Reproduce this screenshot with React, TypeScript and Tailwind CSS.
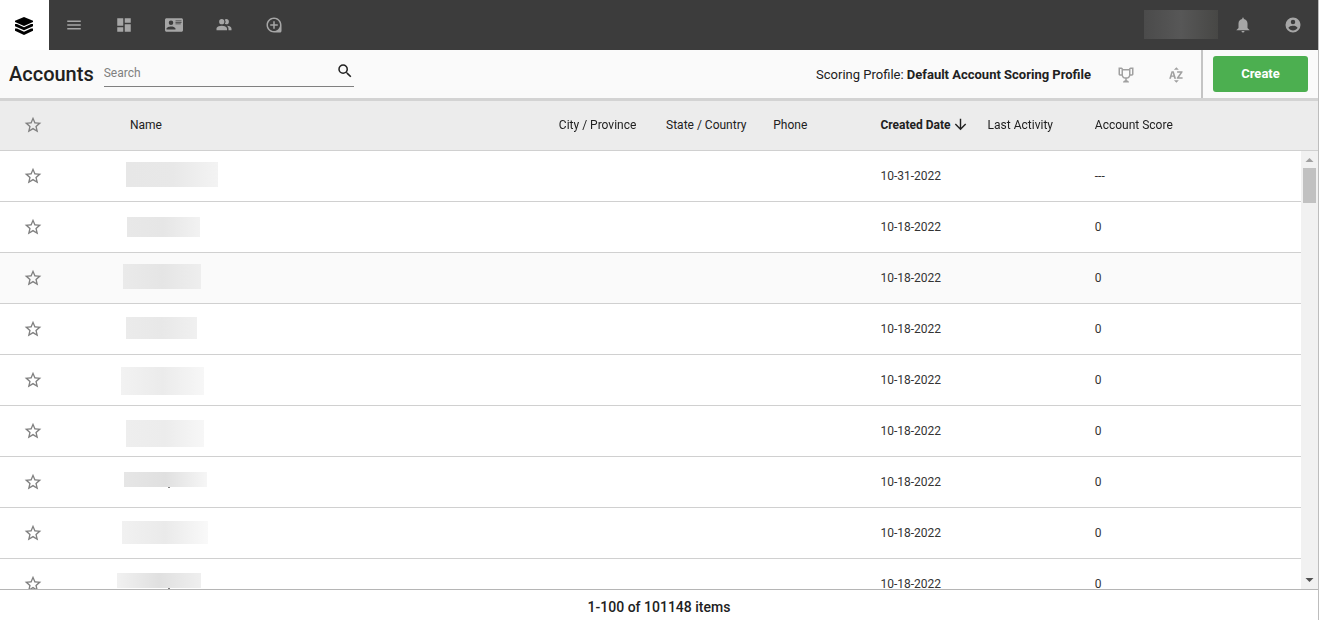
import React, { useState } from "react";
import { MdArrowDownward, MdDashboard, MdLoupe, MdMenu, MdSearch, MdStarBorder } from "react-icons/md";

function Glyph({ d }: { d: string }) {
  return (
    <svg viewBox="0 0 24 24" className="size-[18px]" fill="currentColor" aria-hidden="true">
      <path d={d} />
    </svg>
  );
}

const ICONS = {
  card: "M2,3H22C23.05,3 24,3.95 24,5V19C24,20.05 23.05,21 22,21H2C0.95,21 0,20.05 0,19V5C0,3.95 0.95,3 2,3M14,6V7H22V6H14M14,8V9H21.5L22,9V8H14M14,10V11H21V10H14M8,13.91C6,13.91 2,15 2,17V18H14V17C14,15 10,13.91 8,13.91M8,6A3,3 0 0,0 5,9A3,3 0 0,0 8,12A3,3 0 0,0 11,9A3,3 0 0,0 8,6Z",
  people:
    "M16 17V19H2V17S2 13 9 13 16 17 16 17M12.5 7.5A3.5 3.5 0 1 0 9 11A3.5 3.5 0 0 0 12.5 7.5M15.94 13A5.32 5.32 0 0 1 18 17V19H22V17S22 13.37 15.94 13M15 4A3.39 3.39 0 0 0 13.07 4.59A5 5 0 0 1 13.07 10.41A3.39 3.39 0 0 0 15 11A3.5 3.5 0 0 0 15 4Z",
  bell: "M14,20A2,2 0 0,1 12,22A2,2 0 0,1 10,20H14M12,2A1,1 0 0,1 13,3V4.08C15.84,4.56 18,7.03 18,10V16L21,19H3L6,16V10C6,7.03 8.16,4.56 11,4.08V3A1,1 0 0,1 12,2Z",
  account:
    "M12,19.2C9.5,19.2 7.29,17.92 6,16C6.03,14 10,12.9 12,12.9C14,12.9 17.97,14 18,16C16.71,17.92 14.5,19.2 12,19.2M12,5A3,3 0 0,1 15,8A3,3 0 0,1 12,11A3,3 0 0,1 9,8A3,3 0 0,1 12,5M12,2A10,10 0 0,0 2,12A10,10 0 0,0 12,22A10,10 0 0,0 22,12C22,6.47 17.5,2 12,2Z",
  trophy:
    "M18 2C17.1 2 16 3 16 4H8C8 3 6.9 2 6 2H2V11C2 12 3 13 4 13H6.2C6.6 15 7.9 16.7 11 17V19.08C8 19.54 8 22 8 22H16C16 22 16 19.54 13 19.08V17C16.1 16.7 17.4 15 17.8 13H20C21 13 22 12 22 11V2H18M6 11H4V4H6V11M16 11.5C16 13.43 15.42 15 12 15C8.59 15 8 13.43 8 11.5V6H16V11.5M20 11H18V4H20V11Z",
  sort: "M9.25,5L12.5,1.75L15.75,5H9.25M15.75,19L12.5,22.25L9.25,19H15.75M8.89,14.3H6L5.28,17H2.91L6,7H9L12.13,17H9.67L8.89,14.3M6.33,12.68H8.56L7.93,10.56L7.67,9.59L7.42,8.63H7.39L7.17,9.6L6.93,10.58L6.33,12.68M13.05,17V15.74L17.8,8.97V8.91H13.5V7H20.73V8.34L16.09,15V15.08H20.8V17H13.05Z",
};

function IconButton({ label, className = "", children }: { label: string; className?: string; children: React.ReactNode }) {
  return (
    <button type="button" aria-label={label} className={`flex w-[50px] shrink-0 items-center justify-center self-stretch ${className}`}>
      {children}
    </button>
  );
}

function TopBar() {
  return (
    <header className="flex h-[50px] shrink-0 items-center bg-[#3c3c3c] text-[#a6a6a6]">
      <a href="#home" aria-label="Home" className="flex w-[49px] items-center justify-center self-stretch bg-white pt-[2px] pr-px text-black">
        <svg viewBox="0 0 18 18" className="size-[18px]" fill="currentColor" aria-hidden="true">
          <path d="M9 0 18 3.8V5L9 9 0 5V3.8Z" />
          <path d="M0 7 2 7 9 10.2 16 7 18 7V9.2L9 13.3 0 9.2Z" />
          <path d="M0 11.6 2 11.6 9 14.8 16 11.6 18 11.6V13.8L9 18 0 13.8Z" />
        </svg>
      </a>
      <nav className="flex self-stretch">
        <IconButton label="Menu"><MdMenu className="size-[18px]" /></IconButton>
        <IconButton label="Dashboard"><MdDashboard className="size-[18px]" /></IconButton>
        <IconButton label="Accounts"><Glyph d={ICONS.card} /></IconButton>
        <IconButton label="Contacts"><Glyph d={ICONS.people} /></IconButton>
        <IconButton label="Add"><MdLoupe className="size-[18px]" /></IconButton>
      </nav>
      <div className="mb-px ml-auto h-[29px] w-[74px] bg-linear-to-r from-[#4b4b4b] via-[#575757] to-[#474745]" />
      <IconButton label="Notifications"><Glyph d={ICONS.bell} /></IconButton>
      <IconButton label="Profile"><Glyph d={ICONS.account} /></IconButton>
    </header>
  );
}

function Toolbar() {
  return (
    <div className="flex h-[51px] shrink-0 items-center border-b-3 border-[#d3d3d3] bg-[#fafafa]">
      <h1 className="pl-[9px] text-[20px] font-medium">Accounts</h1>
      <div className="mb-[2px] ml-[10px] flex h-[28px] w-[250px] items-center border-b border-[#808080]">
        <input
          type="search"
          aria-label="Search"
          placeholder="Search"
          className="h-[26px] min-w-0 flex-1 bg-transparent text-[12px] outline-none placeholder:text-[#808080]"
        />
        <button type="button" aria-label="Submit search" className="mb-[4px]">
          <MdSearch className="size-[18px]" />
        </button>
      </div>
      <p className="ml-auto pt-[2px] pr-[10px] text-[13px]">
        Scoring Profile: <b className="font-bold">Default Account Scoring Profile</b>
      </p>
      <IconButton label="Scoring profiles" className="pt-[2px] text-[#a0a0a0]"><Glyph d={ICONS.trophy} /></IconButton>
      <IconButton label="Sort" className="pt-[2px] text-[#a0a0a0]"><Glyph d={ICONS.sort} /></IconButton>
      <div className="flex items-center self-stretch border-l-2 border-[#c4c4c4] px-[10px]">
        <button type="button" className="h-[36px] w-[95px] rounded-[3px] bg-[#4caf50] text-[13px] font-bold text-white">
          Create
        </button>
      </div>
    </div>
  );
}

type Row = { date: string; score: string; hover?: boolean; comma?: string; block: string };

const ROWS: Row[] = [
  { date: "10-31-2022", score: "---", block: "ml-[10px] mb-[3px] h-[25px] w-[92px] from-[#e7e7e7] via-[#e8e8e8] to-[#f3f3f3]" },
  { date: "10-18-2022", score: "0", block: "ml-[11px] h-[20px] w-[73px] from-[#e8e8e8] via-[#e6e6e6] to-[#f2f2f2]" },
  { date: "10-18-2022", score: "0", hover: true, block: "ml-[7px] mb-[3px] h-[25px] w-[78px] from-[#eaeaea] via-[#e5e5e5] to-[#eeeeee]" },
  { date: "10-18-2022", score: "0", block: "ml-[10px] mb-[2px] h-[22px] w-[71px] from-[#ebebeb] via-[#e8e8e8] to-[#f0f0f0]" },
  { date: "10-18-2022", score: "0", block: "ml-[5px] mt-[2px] h-[28px] w-[83px] from-[#f2f2f2] via-[#ebebeb] to-[#f7f7f7]" },
  { date: "10-18-2022", score: "0", block: "ml-[10px] mt-[5px] h-[27px] w-[78px] from-[#eeeeee] via-[#ececec] to-[#f7f7f7]" },
  { date: "10-18-2022", score: "0", comma: "left-[44px]", block: "ml-[8px] mb-[5px] h-[15px] w-[83px] from-[#e6e6e6] via-[#e0e0e0] to-[#f6f6f6]" },
  { date: "10-18-2022", score: "0", block: "ml-[6px] mb-px h-[23px] w-[86px] from-[#f1f1f1] via-[#eaeaea] to-[#f9f9f9]" },
  { date: "10-18-2022", score: "0", comma: "left-[51px]", block: "ml-[1px] mb-[7px] h-[15px] w-[84px] from-[#f1f1f1] via-[#e0e0e0] to-[#efefef]" },
];

const TH = "sticky top-0 h-[50px] border-b border-[#d0d0d0] bg-[#ececec] pb-[2px] text-left font-normal";
const TD = "h-[51px] border-b border-[#d0d0d0]";

function AccountsTable() {
  const [starred, setStarred] = useState<number[]>([]);
  const toggle = (i: number) => setStarred((s) => (s.includes(i) ? s.filter((n) => n !== i) : [...s, i]));

  return (
    <main className="flex min-h-0 flex-1 border-b border-[#b5b5b5] bg-white">
      <div className="min-w-0 flex-1 overflow-y-auto [scrollbar-width:none]">
        <table className="w-full table-fixed border-separate border-spacing-0 text-[12px] whitespace-nowrap">
          <colgroup>
            <col className="w-[116px]" />
            <col className="w-[34.04%]" />
            <col className="w-[8.24%]" />
            <col className="w-[8.24%]" />
            <col className="w-[8.24%]" />
            <col className="w-[8.24%]" />
            <col className="w-[8.24%]" />
            <col />
          </colgroup>
          <thead>
            <tr>
              <th scope="col" className={`${TH} pl-[23px]`}>
                <button type="button" aria-label="Starred" className="block text-[#808080]">
                  <MdStarBorder className="size-[20px]" />
                </button>
              </th>
              <th scope="col" className={`${TH} pl-[14px]`}>Name</th>
              <th scope="col" className={TH}>City / Province</th>
              <th scope="col" className={TH}>State / Country</th>
              <th scope="col" className={TH}>Phone</th>
              <th scope="col" aria-sort="descending" className={TH}>
                <button type="button" className="flex items-center gap-[1px] font-bold">
                  Created Date <MdArrowDownward className="size-[17px]" />
                </button>
              </th>
              <th scope="col" className={TH}>Last Activity</th>
              <th scope="col" className={TH}>Account Score</th>
            </tr>
          </thead>
          <tbody>
            {ROWS.map((row, i) => (
              <tr key={i} className={row.hover ? "bg-[#fafafa]" : "bg-white"}>
                <td className={`${TD} pl-[23px]`}>
                  <button
                    type="button"
                    aria-label="Star account"
                    aria-pressed={starred.includes(i)}
                    onClick={() => toggle(i)}
                    className={starred.includes(i) ? "block text-[#f5b301]" : "block text-[#808080]"}
                  >
                    <MdStarBorder className="size-[20px]" />
                  </button>
                </td>
                <td className={TD}>
                  <div className={`relative bg-linear-to-r ${row.block}`}>
                    {row.comma && <span className={`absolute top-full h-px w-[2px] bg-[#808080] ${row.comma}`} />}
                  </div>
                </td>
                <td className={TD} />
                <td className={TD} />
                <td className={TD} />
                <td className={`${TD} text-[#333333]`}>{row.date}</td>
                <td className={TD} />
                <td className={`${TD} text-[#333333]`}>{row.score}</td>
              </tr>
            ))}
          </tbody>
        </table>
      </div>
      <div className="flex w-[17px] shrink-0 flex-col" aria-hidden="true">
        <div className="h-[50px] border-b border-[#d0d0d0] bg-[#ececec]" />
        <div className="flex flex-1 flex-col items-center bg-[#f1f1f1]">
          <svg viewBox="0 0 17 17" className="size-[17px]" fill="#a0a0a0">
            <path d="M4.5 11 8.5 7 12.5 11Z" />
          </svg>
          <div className="h-[35px] w-[13px] bg-[#c1c1c1]" />
          <svg viewBox="0 0 17 17" className="mt-auto size-[17px]" fill="#505050">
            <path d="M4.5 6 8.5 10 12.5 6Z" />
          </svg>
        </div>
      </div>
    </main>
  );
}

export default function App() {
  return (
    <div className="flex h-screen flex-col border-r border-[#bdbdbd] bg-white font-[Roboto,sans-serif] text-[#212121]">
      <TopBar />
      <Toolbar />
      <AccountsTable />
      <footer className="flex h-[30px] shrink-0 items-center justify-center pt-[5px] text-[14px] font-medium">
        <p>1-100 of 101148 items</p>
      </footer>
    </div>
  );
}
